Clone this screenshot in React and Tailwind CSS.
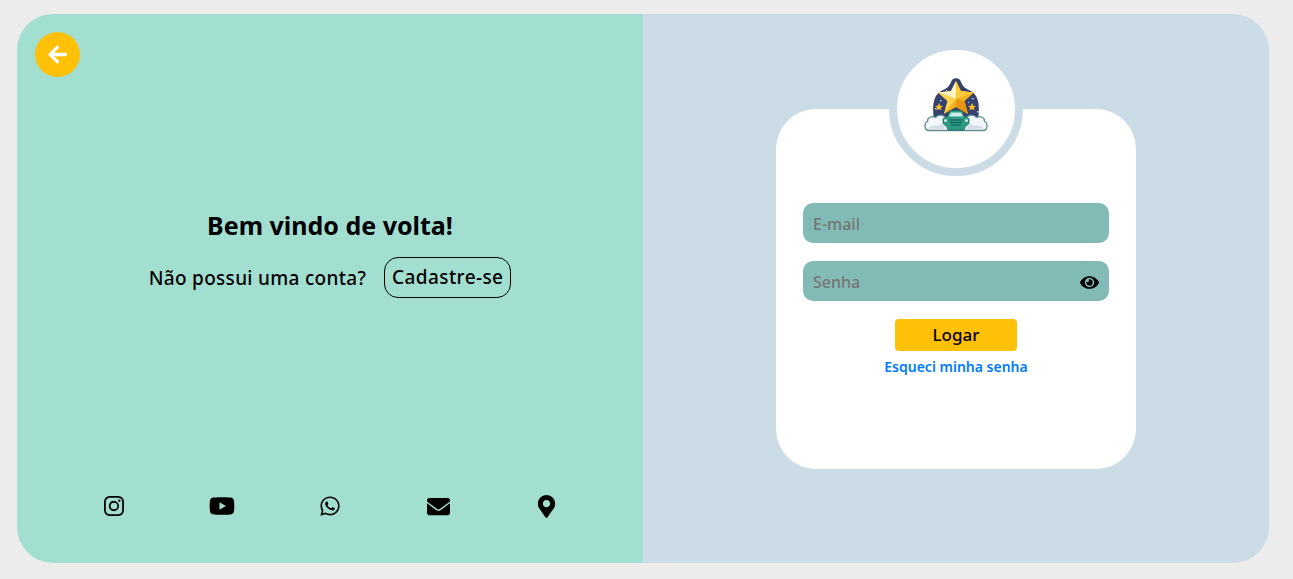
import { FaArrowLeft, FaWhatsapp, FaEnvelope, FaMapMarkerAlt, FaYoutube, FaEye } from 'react-icons/fa';
import { BsInstagram } from 'react-icons/bs';

const SmallStar = ({ x, y }) => (
  <path
    transform={`translate(${x} ${y})`}
    d="M0 -4 L1.2 -1.2 L4 -1 L1.8 .8 L2.5 3.6 L0 2 L-2.5 3.6 L-1.8 .8 L-4 -1 L-1.2 -1.2 Z"
    fill="#fbbf24"
  />
);

// star + car over clouds logo
const Logo = () => (
  <svg width="64" height="54" viewBox="0 0 64 54" className="mb-2">
    {/* night sky */}
    <path d="M10 42 C8 28 9 18 17 13 C21 11 24 10 26 6 L28 2 C30 -0.5 34 -0.5 36 2 L38 6 C40 10 43 11 47 13 C55 18 56 28 54 42 Z" fill="#35426e" />
    <path d="M16 22 h1.5 v1.5 h-1.5z M48 20 h1.5 v1.5 h-1.5z M11 30 h1.5 v1.5 h-1.5z M53 33 h1.5 v1.5 h-1.5z M22 12 h1 v1 h-1z M44 24 h1 v1 h-1z" fill="#c7d2e8" />
    <SmallStar x={15} y={29} />
    <SmallStar x={48} y={29} />
    {/* big star */}
    <path d="M32 3 L37 13 L50 14.5 L40.5 23 L44 36 L32 29 L20 36 L23.5 23 L14 14.5 L27 13 Z" fill="#f5b21e" />
    <path d="M32 3 L37 13 L50 14.5 L32 21 Z" fill="#fbcb3a" />
    <path d="M32 21 L40.5 23 L44 36 L32 29 Z" fill="#e8960f" />
    <path d="M32 3 L27 13 L14 14.5 L32 21 Z" fill="#fff3c4" />
    <path d="M14 14.5 L32 21 L20 36 L23.5 23 Z" fill="#fcd44e" />
    {/* clouds */}
    <path d="M5 52.5 C0 52.5 0 44.5 3.5 43.5 C3 39.5 8 37.5 11.5 39.5 C14 36 20 36.5 22 40 L42 40 C44 36.5 50 36 52.5 39.5 C56 37.5 61 39.5 60.5 43.5 C64 44.5 64 52.5 59 52.5 Z" fill="#f4f7f9" stroke="#5f8a94" strokeWidth="1.3" />
    <path d="M4 50.5 C8 46 12 48.5 15 47 C18 45 20 47 21 51 Z M43 51 C44 47 46 45 49 47 C52 48.5 56 46 60 50.5 Z" fill="#d3dee6" />
    {/* car */}
    <path d="M23.5 38.5 L25.5 33.5 C27 32 37 32 38.5 33.5 L40.5 38.5 L45 40.5 L45 45.5 L41 49 L40 52 L24 52 L23 49 L19 45.5 L19 40.5 Z" fill="#2c9c85" stroke="#1c6b60" strokeWidth="0.8" />
    <path d="M25 38.5 L27 34.5 L37 34.5 L39 38.5 Z" fill="#cdeae6" />
    <path d="M25 42 H39 M26 44.5 H38 M27 47 H37" stroke="#0f5149" strokeWidth="1" />
    <path d="M20 41.5 h3 v2 h-3z M41 41.5 h3 v2 h-3z" fill="#e8f5f2" />
  </svg>
);

const Field = ({ placeholder, children }) => (
  <div className="relative h-10 w-[306px] rounded-[10px] bg-[#82bbb5]">
    <input
      placeholder={placeholder}
      className="h-full w-full rounded-[10px] bg-transparent px-[10px] pt-[2px] text-base font-medium text-black outline-none placeholder:text-[#757575]"
    />
    {children}
  </div>
);

export default function App() {
  return (
    <div className="min-h-[579px] bg-[#ececec] px-[17px] pt-[14px] pb-4 font-['Noto_Sans',sans-serif]">
      <div className="flex h-[549px] w-[1252px] overflow-hidden rounded-[36px]">
        {/* Left panel */}
        <div className="flex w-[626px] flex-col bg-[#a3dfd1] pt-[18px] text-black">
          <button className="ml-[18px] flex h-[45px] w-[45px] items-center justify-center rounded-full bg-[#ffc107] text-white">
            <FaArrowLeft size={21} />
          </button>

          <h1 className="mt-[129px] text-center text-[25px] leading-[38px] font-bold">Bem vindo de volta!</h1>

          <div className="mt-[13px] flex items-center justify-center gap-[18px] text-[19px] tracking-[0.3px]">
            <span className="mt-[2px] font-medium">Não possui uma conta?</span>
            <button className="h-[41px] w-[127px] rounded-[14px] border border-black text-[19px] font-medium tracking-[0.4px]">Cadastre-se</button>
          </div>

          <div className="mx-auto mt-[195px] grid h-[26px] w-[540px] grid-cols-5 items-center justify-items-center">
            <BsInstagram size={20} />
            <FaYoutube size={26} />
            <FaWhatsapp size={22} />
            <FaEnvelope size={23} />
            <FaMapMarkerAlt size={23} />
          </div>
        </div>

        {/* Right panel */}
        <div className="flex w-[626px] justify-center bg-[#ccdce6] pt-[95px]">
          <div className="relative flex h-[360px] w-[360px] flex-col items-center rounded-[40px] bg-white pt-[94px]">
            <div className="absolute top-[-67px] left-[113px] flex h-[134px] w-[134px] items-center justify-center rounded-full border-8 border-[#ccdce6] bg-white">
              <Logo />
            </div>

            <div className="flex flex-col gap-[18px]">
              <Field placeholder="E-mail" />
              <Field placeholder="Senha">
                <FaEye size={19} className="absolute top-[12px] right-[10px] text-black" />
              </Field>
            </div>

            <button className="mt-[18px] h-8 w-[122px] rounded-[4px] bg-[#ffc107] text-[17px] font-medium text-black">Logar</button>
            <a href="#" className="mt-[7px] text-[14px] leading-[18px] font-semibold text-[#007bff]">Esqueci minha senha</a>
          </div>
        </div>
      </div>
    </div>
  );
}
